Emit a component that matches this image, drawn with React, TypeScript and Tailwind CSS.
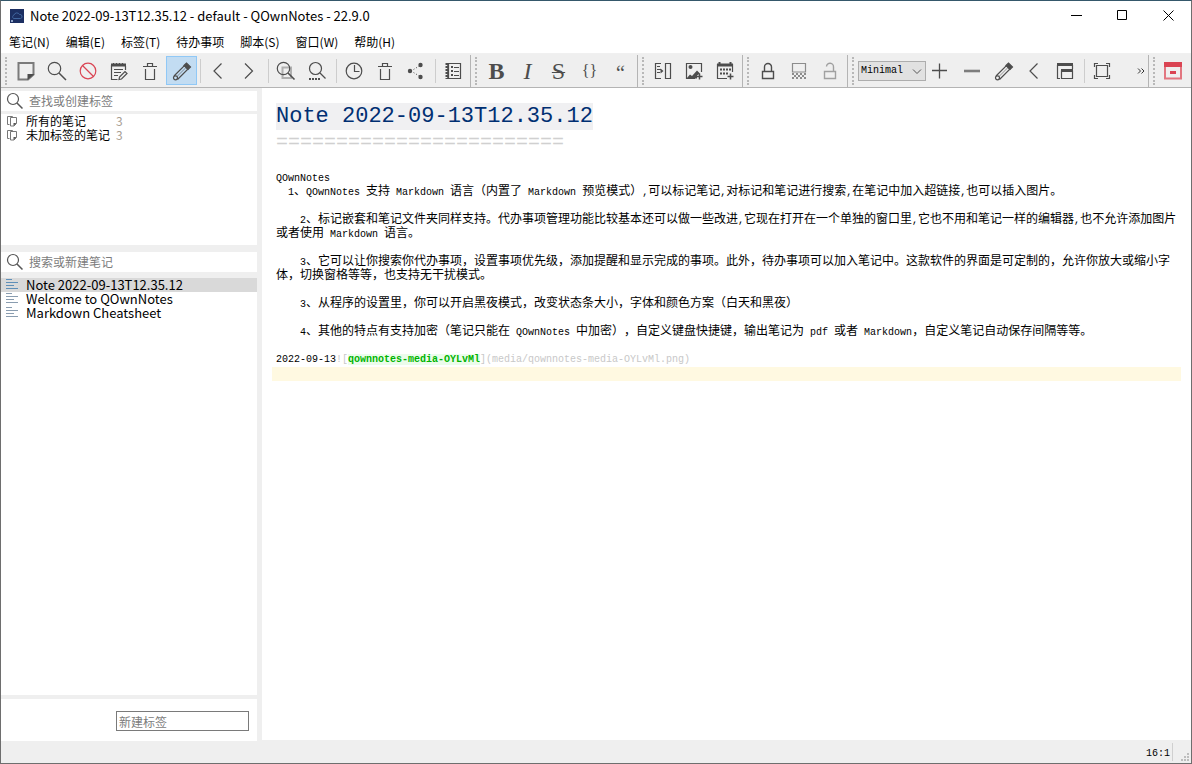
import { Fragment, type ReactNode } from "react";
import clsx from "clsx";

const menus = ["笔记(N)", "编辑(E)", "标签(T)", "待办事项", "脚本(S)", "窗口(W)", "帮助(H)"];

const tags = [
  { name: "所有的笔记", count: 3 },
  { name: "未加标签的笔记", count: 3 },
];

const notes = ["Note 2022-09-13T12.35.12", "Welcome to QOwnNotes", "Markdown Cheatsheet"];

const lines = [
  "QOwnNotes",
  "  1、QOwnNotes 支持 Markdown 语言（内置了 Markdown 预览模式）,可以标记笔记,对标记和笔记进行搜索,在笔记中加入超链接,也可以插入图片。",
  "",
  "    2、标记嵌套和笔记文件夹同样支持。代办事项管理功能比较基本还可以做一些改进,它现在打开在一个单独的窗口里,它也不用和笔记一样的编辑器,也不允许添加图片或者使用 Markdown 语言。",
  "",
  "    3、它可以让你搜索你代办事项，设置事项优先级，添加提醒和显示完成的事项。此外，待办事项可以加入笔记中。这款软件的界面是可定制的，允许你放大或缩小字体，切换窗格等等，也支持无干扰模式。",
  "",
  "    3、从程序的设置里，你可以开启黑夜模式，改变状态条大小，字体和颜色方案（白天和黑夜）",
  "",
  "    4、其他的特点有支持加密（笔记只能在 QOwnNotes 中加密），自定义键盘快捷键，输出笔记为 pdf 或者 Markdown，自定义笔记自动保存间隔等等。",
  "",
];

// Latin runs are half as wide as a Chinese character
function Mono({ children }: { children: string }) {
  return (
    <>
      {children.split(/([\x20-\x7e]+)/).map((part, i) =>
        i % 2 ? (
          <span key={i} className="text-[10px] leading-[8px]">
            {part}
          </span>
        ) : (
          <Fragment key={i}>{part}</Fragment>
        )
      )}
    </>
  );
}

function Icon({ children, className }: { children: ReactNode; className?: string }) {
  return (
    <svg
      viewBox="0 0 25 25"
      className={clsx("w-[25px] h-[25px] shrink-0", className)}
      fill="none"
      stroke="currentColor"
      strokeWidth="1.2"
      aria-hidden="true"
    >
      {children}
    </svg>
  );
}

const icons = {
  note: (
    <Icon>
      <path d="M4.500 5h15v11.500L14 21.500H4.500z" stroke="#7b7b7b" strokeWidth="2" />
      <path d="M13.500 22v-6h7z" fill="#4d4d4d" stroke="none" />
    </Icon>
  ),
  search: (
    <Icon>
      <circle cx="9.500" cy="10.500" r="6.200" />
      <path d="M14 15l7 7" strokeWidth="1.500" />
    </Icon>
  ),
  stop: (
    <Icon className="text-[#da4453]">
      <circle cx="12" cy="13" r="7.800" />
      <path d="M6.500 7.500l11 11" />
    </Icon>
  ),
  editNote: (
    <Icon>
      <path d="M4 7h15" strokeWidth="3" />
      <path d="M6.500 5v2M9.500 5v2M12.500 5v2M15.500 5v2" />
      <path d="M4.500 7v14.500h6M18.500 8v4M7 11.500h9M7 14.500h7M7 17.500h4" />
      <path d="M12 21.500l.5-2.500 5.500-5.500 2 2-5.500 5.500z" />
    </Icon>
  ),
  trash: (
    <Icon>
      <path d="M5 8.500h14M9.500 8V5.500h5V8M7.500 11v10.500h9V11" />
    </Icon>
  ),
  pencil: (
    <Icon>
      <path d="M5 18l10.500-10.500 3.500 3.500L8.500 21.500" />
      <path d="M15 7.500l2.500-2.500 4 4-2.500 2.500z" fill="currentColor" />
      <circle cx="6.500" cy="19.800" r="2" />
      <path d="M8 18.500l8.500-8.500" strokeWidth="0.600" />
    </Icon>
  ),
  back: (
    <Icon>
      <path d="M15.500 5.500L8 13l7.500 7.500" />
    </Icon>
  ),
  forward: (
    <Icon>
      <path d="M8 5.500l7.500 7.500L8 20.500" />
    </Icon>
  ),
  findNote: (
    <Icon>
      <path d="M8.500 9.500h8.500v10.500H8.500z" stroke="#b0b0b0" strokeWidth="2" />
      <circle cx="9.500" cy="10.500" r="6.200" />
      <path d="M14 15l6.500 6.500" strokeWidth="1.600" />
    </Icon>
  ),
  findMore: (
    <Icon>
      <circle cx="10.500" cy="10.500" r="6" />
      <path d="M15 15l5.500 5.500" />
      <path d="M4 21h11" strokeDasharray="2 1" strokeWidth="2" />
    </Icon>
  ),
  clock: (
    <Icon>
      <circle cx="12" cy="13" r="7.800" />
      <path d="M12.500 7v6.500h5" />
    </Icon>
  ),
  share: (
    <Icon>
      <path d="M7 13l10-6M7 13l10 6" strokeDasharray="1 2" strokeWidth="1" />
      <circle cx="6" cy="13" r="2.200" fill="currentColor" stroke="none" />
      <circle cx="16.500" cy="7" r="2.200" fill="currentColor" stroke="none" />
      <circle cx="16.500" cy="19" r="2.200" fill="currentColor" stroke="none" />
    </Icon>
  ),
  notebook: (
    <Icon>
      <path d="M7.500 5.500h12v15h-12z" />
      <path d="M6 5v16" strokeWidth="3" strokeDasharray="2 1" />
      <path d="M7 5v16" strokeWidth="1.500" />
      <path d="M10 9h2M10 13h2M10 17h2" strokeWidth="2" />
      <path d="M13 9.500h5M13 13.500h5M13 17.500h5" />
    </Icon>
  ),
  paste: (
    <Icon>
      <path d="M10 5.500H4.500v15H10M14.500 5.500h5v15h-5z" />
      <path d="M6 8.500h3M6 11.500h4M6 14.500h3" />
      <path d="M9.500 10.500l3 2.500-3 2.500z" fill="currentColor" stroke="none" />
    </Icon>
  ),
  image: (
    <Icon>
      <path d="M13 20.500H4.500v-15h15V14" />
      <circle cx="8.500" cy="9" r="2" fill="currentColor" stroke="none" />
      <path d="M4.500 20.500l3.500-4 2 1.500 5-5.500 3 3-3 2v3z" fill="currentColor" stroke="none" />
      <path d="M17.500 15.500v6M14.500 18.500h6" strokeWidth="1.500" />
    </Icon>
  ),
  calendar: (
    <Icon>
      <path d="M4 7h16" strokeWidth="3" />
      <path d="M6.500 4v2M17.500 4v2" strokeWidth="2" />
      <path d="M4.500 6v14.500H14M19.500 6v8" />
      <path d="M7 11.500h11M7 15.500h9" strokeWidth="2" strokeDasharray="2 1" />
      <path d="M17.500 15.500v6M14.500 18.500h6" strokeWidth="1.500" />
    </Icon>
  ),
  lock: (
    <Icon>
      <path d="M6.500 13.500h11v7h-11zM8.500 13v-4a3.500 3.500 0 0 1 7 0v4" strokeWidth="1.400" />
    </Icon>
  ),
  encrypt: (
    <Icon className="text-[#8c8c8c]">
      <path d="M5.500 14V5.500h13V14z" />
      <path d="M5 16h14M5 20h14" strokeWidth="2" strokeDasharray="2 2" />
      <path d="M7 18h12" strokeWidth="2" strokeDasharray="2 2" />
    </Icon>
  ),
  unlock: (
    <Icon className="text-[#a0a0a0]">
      <path d="M6.500 13.500h11v7h-11zM15.500 13v-4a3.500 3.500 0 0 0-7-.5" strokeWidth="1.400" />
    </Icon>
  ),
  plus: (
    <Icon>
      <path d="M10.500 5.500v15M3 12.500h15" strokeWidth="1.300" />
    </Icon>
  ),
  minus: (
    <Icon>
      <path d="M4 13h16" stroke="#7d7d7d" strokeWidth="2.600" />
    </Icon>
  ),
  layout: (
    <Icon>
      <path d="M4 6.500h16" strokeWidth="3" />
      <path d="M4.500 7v13.500H7M19.500 7v4M8.500 13h11v7.500h-11z" />
      <path d="M8 12.500h12" strokeWidth="3" />
    </Icon>
  ),
  fullscreen: (
    <Icon>
      <path d="M6.500 7.500h11v11h-11z" />
      <path d="M4.500 9V5.500H8M16 5.500h3.500V9M19.500 17v3.500H16M8 20.500H4.500V17" />
    </Icon>
  ),
  distraction: (
    <Icon className="text-[#da4453]">
      <path d="M3 5v15.500h16V5" stroke="#e27680" strokeWidth="2" />
      <path d="M2 6.500h18" strokeWidth="5" />
      <path d="M8 14.500h6" strokeWidth="3" />
    </Icon>
  ),
};

function ToolButton({ label, active, children }: { label: string; active?: boolean; children: ReactNode }) {
  return (
    <button
      aria-label={label}
      className={clsx(
        "w-[31px] h-[29px] shrink-0 flex items-center justify-center border text-[#4d4d4d] leading-none font-['Liberation_Serif',serif]",
        active ? "bg-[#c2dcf2] border-[#90c8f6]" : "border-transparent"
      )}
    >
      {children}
    </button>
  );
}

function ToolGroup({ children, last, grow }: { children: ReactNode; last?: boolean; grow?: boolean }) {
  return (
    <div className={clsx("flex items-center h-8", grow ? "flex-1 min-w-0" : "pr-px", !last && "border-r border-[#b4b4b4]")}>
      <div className="w-[10px] shrink-0 flex justify-center">
        <div className="h-7 border-l-2 border-dotted border-[#b8b8b8]" />
      </div>
      {children}
    </div>
  );
}

function Separator() {
  return (
    <div className="w-[6px] shrink-0 flex justify-center">
      <div className="w-px h-6 bg-[#cdcdcd]" />
    </div>
  );
}

function SearchBox({ placeholder }: { placeholder: string }) {
  return (
    <label className="flex items-center h-5 bg-white pl-[3px] text-[#555]">
      <svg viewBox="0 0 22 20" className="w-[22px] h-5 shrink-0" fill="none" stroke="currentColor" strokeWidth="1.2">
        <circle cx="9" cy="8" r="5.500" />
        <path d="M13 12l5.500 5.500" strokeWidth="1.500" />
      </svg>
      <input
        aria-label={placeholder}
        placeholder={placeholder}
        className="flex-1 min-w-0 pl-[3px] outline-none placeholder:text-[#7c7c7c]"
      />
    </label>
  );
}

export default function App() {
  return (
    <div className="min-h-screen flex flex-col bg-[#efefef] border border-[#6e6e6e] border-t-[#35586b] text-xs text-black font-['Noto_Sans_CJK_SC',sans-serif]">
      {/* Title bar */}
      <header className="flex items-center h-[30px] bg-white pl-[9px]">
        <svg viewBox="0 0 14 14" className="w-[14px] h-[14px] shrink-0">
          <path d="M0 0h14v14H0z" fill="#1c2f62" />
          <path d="M3.500 9.500a2 2 0 0 1 .5-3.500 3 3 0 0 1 5.500-.5 2 2 0 0 1 1 4z" fill="none" stroke="#41669f" />
          <path d="M1 11h2v2H1z" fill="#8ea3c8" />
        </svg>
        <h1 className="flex-1 pl-[6px] text-[13px]">Note 2022-09-13T12.35.12 - default - QOwnNotes - 22.9.0</h1>
        <div className="flex self-start">
          <button aria-label="最小化" className="w-[46px] h-7 flex items-center justify-center">
            <svg viewBox="0 0 11 11" className="w-[11px] h-[11px]" stroke="#000">
              <path d="M0 5.500h11" />
            </svg>
          </button>
          <button aria-label="最大化" className="w-[46px] h-7 flex items-center justify-center">
            <svg viewBox="0 0 11 11" className="w-[11px] h-[11px]" stroke="#000" fill="none">
              <path d="M.5.5h9v9h-9z" />
            </svg>
          </button>
          <button aria-label="关闭" className="w-[46px] h-7 flex items-center justify-center">
            <svg viewBox="0 0 11 11" className="w-[11px] h-[11px]" stroke="#000">
              <path d="M.5.5l10 10M10.500.5l-10 10" />
            </svg>
          </button>
        </div>
      </header>

      {/* Menu bar */}
      <nav className="flex items-center h-[22px] bg-white px-2 gap-4">
        {menus.map((menu) => (
          <button key={menu}>{menu}</button>
        ))}
      </nav>

      {/* Toolbars */}
      <div className="flex items-center h-[35px] border-t border-b border-b-[#b4b4b4] border-t-[#f0f0f0]">
        <ToolGroup>
          <ToolButton label="新建笔记">{icons.note}</ToolButton>
          <ToolButton label="查找笔记">{icons.search}</ToolButton>
          <ToolButton label="停止">{icons.stop}</ToolButton>
          <ToolButton label="重命名笔记">{icons.editNote}</ToolButton>
          <ToolButton label="删除笔记">{icons.trash}</ToolButton>
          <ToolButton label="允许编辑" active>
            {icons.pencil}
          </ToolButton>
          <Separator />
          <ToolButton label="后退">{icons.back}</ToolButton>
          <ToolButton label="前进">{icons.forward}</ToolButton>
          <Separator />
          <ToolButton label="在笔记中查找">{icons.findNote}</ToolButton>
          <ToolButton label="替换">{icons.findMore}</ToolButton>
          <Separator />
          <ToolButton label="历史版本">{icons.clock}</ToolButton>
          <ToolButton label="回收站">{icons.trash}</ToolButton>
          <ToolButton label="分享">{icons.share}</ToolButton>
          <Separator />
          <ToolButton label="笔记本">{icons.notebook}</ToolButton>
        </ToolGroup>
        <ToolGroup>
          <ToolButton label="粗体">
            <span className="text-2xl leading-none font-bold">B</span>
          </ToolButton>
          <ToolButton label="斜体">
            <span className="text-2xl leading-none italic">I</span>
          </ToolButton>
          <ToolButton label="删除线">
            <span className="text-2xl leading-none line-through decoration-1">S</span>
          </ToolButton>
          <ToolButton label="代码">
            <span className="text-base leading-none">{"{}"}</span>
          </ToolButton>
          <ToolButton label="引用">
            <span className="pt-1 text-xl leading-none">“</span>
          </ToolButton>
        </ToolGroup>
        <ToolGroup>
          <ToolButton label="插入文本">{icons.paste}</ToolButton>
          <ToolButton label="插入图片">{icons.image}</ToolButton>
          <ToolButton label="插入日期">{icons.calendar}</ToolButton>
        </ToolGroup>
        <ToolGroup>
          <ToolButton label="加密笔记">{icons.lock}</ToolButton>
          <ToolButton label="编辑加密笔记">{icons.encrypt}</ToolButton>
          <ToolButton label="解密笔记">{icons.unlock}</ToolButton>
        </ToolGroup>
        <ToolGroup grow>
          <div className="relative shrink-0">
            <select
              aria-label="工作区"
              className="block appearance-none w-[68px] h-5 pl-[2px] bg-[#e1e1e1] border border-[#adadad] font-['Liberation_Mono',monospace] text-[10px]"
            >
              <option>Minimal</option>
            </select>
            <svg viewBox="0 0 10 6" className="absolute right-1 top-2 w-[10px] h-[6px] pointer-events-none" fill="none" stroke="#555">
              <path d="M1 .5l4 4 4-4" />
            </svg>
          </div>
          <ToolButton label="添加工作区">{icons.plus}</ToolButton>
          <ToolButton label="移除工作区">{icons.minus}</ToolButton>
          <ToolButton label="重命名工作区">{icons.pencil}</ToolButton>
          <ToolButton label="上一个工作区">{icons.back}</ToolButton>
          <ToolButton label="面板">{icons.layout}</ToolButton>
          <Separator />
          <ToolButton label="全屏">{icons.fullscreen}</ToolButton>
          <button aria-label="更多" className="ml-auto pr-[3px] text-[#333]">
            <svg viewBox="0 0 8 8" className="w-2 h-2" fill="none" stroke="currentColor">
              <path d="M1 1.500l2.500 2.500L1 6.500M4.500 1.500L7 4 4.500 6.500" />
            </svg>
          </button>
        </ToolGroup>
        <ToolGroup last>
          <ToolButton label="免打扰模式">{icons.distraction}</ToolButton>
        </ToolGroup>
      </div>

      <div className="flex flex-1 gap-[5px]">
        {/* Sidebar */}
        <aside className="w-64 shrink-0 flex flex-col pt-[3px]">
          <SearchBox placeholder="查找或创建标签" />
          <ul className="mt-[3px] h-[131px] bg-white">
            {tags.map((tag) => (
              <li key={tag.name} className="flex items-center h-[14px] pl-[5px] leading-[14px]">
                <svg viewBox="0 0 12 12" className="w-3 h-3 shrink-0" fill="none" stroke="#777">
                  <path d="M3.500 9.500h-2v-8h5v1" />
                  <path d="M4.500 2.500h6v6l-2.500 2.500H4.500z" />
                  <path d="M7.500 11V8h3z" fill="#555" stroke="none" />
                </svg>
                <span className="w-[90px] ml-2">{tag.name}</span>
                <span className="text-[#a9a093]">{tag.count}</span>
              </li>
            ))}
          </ul>
          <div className="mt-[7px]">
            <SearchBox placeholder="搜索或新建笔记" />
          </div>
          <ul className="mt-[6px] flex-1 bg-white">
            {notes.map((note, i) => (
              <li
                key={note}
                className={clsx("flex items-center h-[14px] pl-[5px] text-[13px] leading-[14px]", i === 0 && "bg-[#d9d9d9]")}
              >
                <svg viewBox="0 0 12 14" className="w-3 h-[14px] shrink-0" stroke={i === 0 ? "#5f8fb8" : "#8a9db0"}>
                  <path d="M0 1.500h6M0 4.500h12M0 7.500h8M0 10.500h12" />
                </svg>
                <span className="ml-2">{note}</span>
              </li>
            ))}
          </ul>
          <div className="mt-1 h-[42px] pt-[2px] bg-white flex items-center justify-end pr-2">
            <input
              aria-label="新建标签"
              placeholder="新建标签"
              className="w-[133px] h-5 border border-[#7a7a7a] px-[2px] outline-none placeholder:text-[#7c7c7c]"
            />
          </div>
        </aside>

        {/* Editor */}
        <main className="flex-1 min-w-0 bg-white mb-px pt-[15px] px-[10px] leading-[14px] font-['Liberation_Mono','Noto_Sans_CJK_SC',monospace] [text-spacing-trim:space-all]">
          <div className="pl-1 h-[27px] text-[22px] leading-[27px] text-[#002f72]">
            <span className="inline-block bg-[#f0f0f2]">Note 2022-09-13T12.35.12</span>
          </div>
          <div className="pl-1 mb-[15px] text-xl leading-[26px] text-[#d0d0d0]">========================</div>
          {lines.map((line, i) => (
            <p key={i} className="pl-1 min-h-[14px] whitespace-pre-wrap">
              <Mono>{line}</Mono>
            </p>
          ))}
          <p className="pl-1 h-[14px] text-[10px] text-[#c8c8c8]">
            <span className="text-black">2022-09-13</span>![
            <span className="bg-[#ebfceb] font-bold text-[#00b400]">qownnotes-media-OYLvMl</span>
            ](media/qownnotes-media-OYLvMl.png)
          </p>
          <div className="h-[14px] bg-[#fff9e1]" />
        </main>
      </div>

      {/* Status bar */}
      <footer className="flex items-center justify-end h-[22px]">
        <span className="pt-1 pr-[2px] font-['Liberation_Mono',monospace] text-[10px]">16:1</span>
        <div className="w-px h-[18px] bg-[#d0d0d0]" />
        <svg viewBox="0 0 18 22" className="w-[18px] h-[22px]" fill="#bdbdbd">
          <path d="M14 12h2v2h-2zM14 15h2v2h-2zM11 15h2v2h-2zM14 18h2v2h-2zM11 18h2v2h-2zM8 18h2v2H8z" />
        </svg>
      </footer>
    </div>
  );
}
